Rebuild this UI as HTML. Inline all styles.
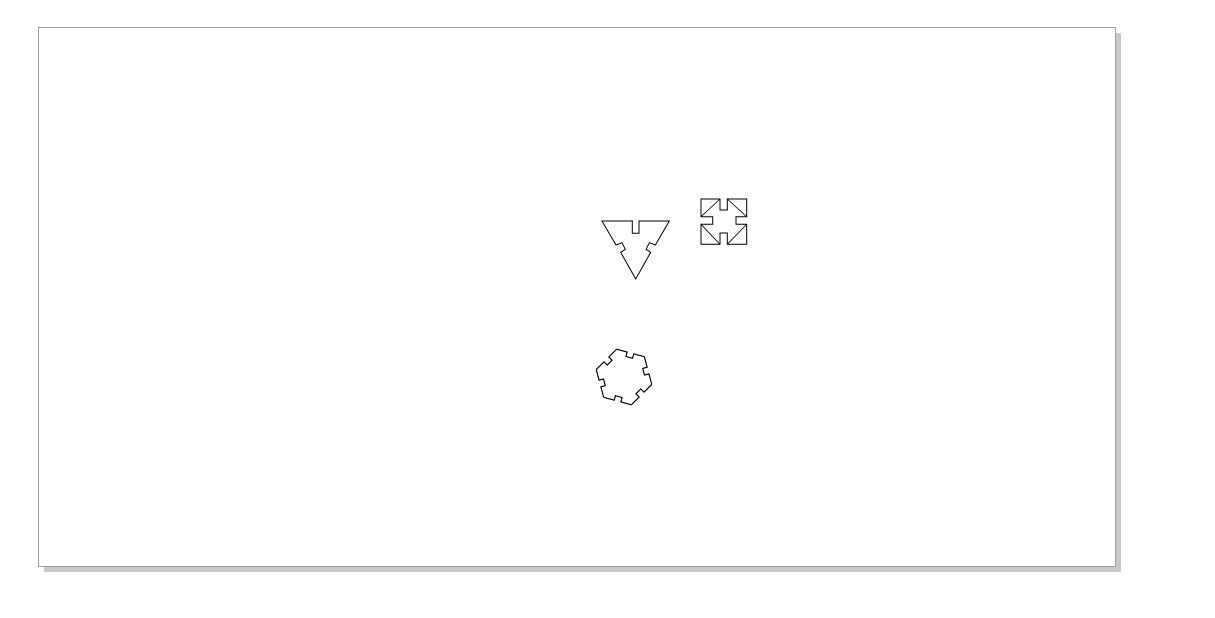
<!DOCTYPE html>
<html><head><style>
html,body{margin:0;padding:0;background:#fff;width:1215px;height:618px;overflow:hidden}
</style></head><body>
<svg width="1215" height="618" style="position:absolute;left:0;top:0">
<rect x="44" y="33" width="1077" height="539" fill="#c8c8c8"/>
<rect x="38.5" y="27.5" width="1077" height="539" fill="#fff" stroke="#a0a0a0"/>
<g fill="none" stroke="#000" stroke-width="1">
<polygon points="602,221 632.3,221 632.3,233.3 639,233.3 639,221 669.3,221 655.4,245 649.4,242.7 646.1,249.3 650.7,252.3 635.7,279 620.7,252.3 625.3,249.3 622,242.7 616,245"/>
<polygon points="701,199 720,199 720,210 727.3,210 727.3,199 746.7,199 746.7,216.7 736,216.7 736,224.3 746.7,224.3 746.7,244.3 727.3,244.3 727.3,233 720,233 720,244.3 701,244.3 701,224.3 712.7,224.3 712.7,216.7 701,216.7"/>
<path d="M701,216.7 L720,199 M727.3,199 L746.7,216.7 M701,224.3 L720,244.3 M727.3,244.3 L746.7,224.3" stroke-width="0.8"/>
<g transform="translate(624,377) rotate(15) scale(1.15)">
<polyline points="-12.5,-21.65 -3,-21.65 -3,-17.65 3,-17.65 3,-21.65 12.5,-21.65"/>
<polyline transform="rotate(60)" points="-12.5,-21.65 -3,-21.65 -3,-17.65 3,-17.65 3,-21.65 12.5,-21.65"/>
<polyline transform="rotate(120)" points="-12.5,-21.65 -3,-21.65 -3,-17.65 3,-17.65 3,-21.65 12.5,-21.65"/>
<polyline transform="rotate(180)" points="-12.5,-21.65 -3,-21.65 -3,-17.65 3,-17.65 3,-21.65 12.5,-21.65"/>
<polyline transform="rotate(240)" points="-12.5,-21.65 -3,-21.65 -3,-17.65 3,-17.65 3,-21.65 12.5,-21.65"/>
<polyline transform="rotate(300)" points="-12.5,-21.65 -3,-21.65 -3,-17.65 3,-17.65 3,-21.65 12.5,-21.65"/>
</g>
</g>
</svg>
</body></html>
